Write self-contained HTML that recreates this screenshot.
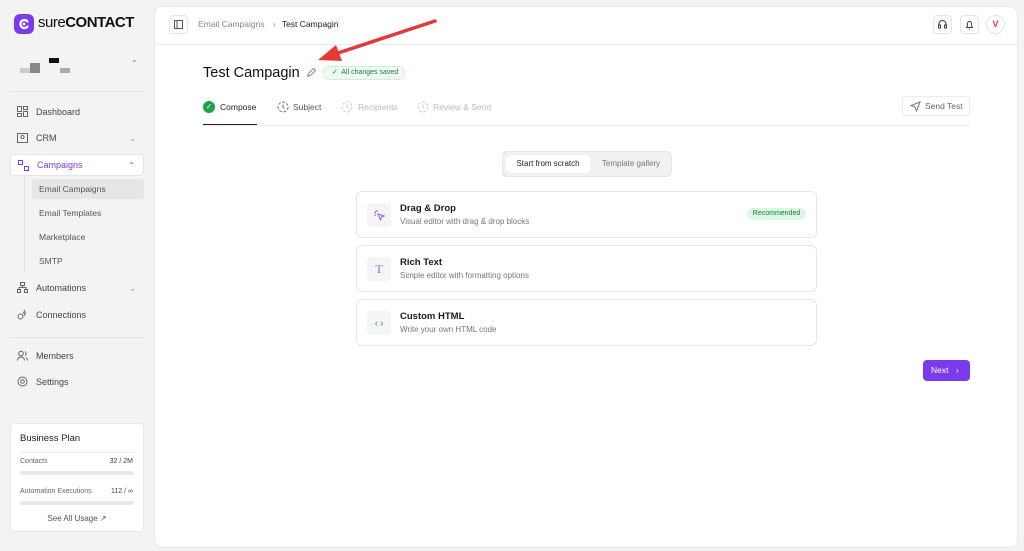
<!DOCTYPE html>
<html><head><meta charset="utf-8"><style>
*{box-sizing:border-box;margin:0;padding:0}
body{width:1024px;height:551px;background:#f3f3f4;font-family:"Liberation Sans",sans-serif;position:relative;overflow:hidden;color:#111}
.abs{position:absolute}
.nav{position:absolute;left:10px;width:134px;height:22px;font-size:9px;color:#444;display:flex;align-items:center;padding-left:26px}
.nav svg{position:absolute;left:7px;top:5px}
.sub{position:absolute;left:32px;width:112px;height:20px;font-size:8.5px;color:#555;display:flex;align-items:center;padding-left:7px}
.main{position:absolute;left:154px;top:6px;width:864px;height:542px;background:#fff;border-radius:8px;border:1px solid #e8e8ea}
.card{position:absolute;left:356px;width:461px;height:47px;border:1px solid #e6e6e8;border-radius:6px;background:#fff}
.card .ic{position:absolute;left:10px;top:11px;width:24px;height:24px;border-radius:4px;background:#f4f5f5;display:flex;align-items:center;justify-content:center}
.card .t{position:absolute;left:43px;top:11px;font-size:9.5px;font-weight:bold;color:#1a1a1a}
.card .d{position:absolute;left:43px;top:25px;font-size:8px;color:#777}
.ibtn{position:absolute;width:19px;height:19px;border:1px solid #e4e4e6;border-radius:4px;background:#fff}
</style></head><body>
<div class="abs" style="left:14px;top:14px;width:20px;height:20px;border-radius:6px;background:#7c3aed"></div>
<svg class="abs" style="left:14px;top:14px" width="20" height="20"><path d="M13.5 7.5A4 4 0 1 0 13.5 12.5" stroke="#fff" stroke-width="2.2" fill="none" stroke-linecap="round"/><circle cx="10" cy="10" r="1.4" fill="#fff"/></svg>
<div class="abs" style="left:38px;top:14px;font-size:15px;color:#111;letter-spacing:-0.5px">sure<b style="font-weight:bold">CONTACT</b></div>
<div class="abs" style="left:20px;top:68px;width:10px;height:5px;background:#ccc"></div>
<div class="abs" style="left:30px;top:63px;width:10px;height:10px;background:#888"></div>
<div class="abs" style="left:49px;top:58px;width:10px;height:5px;background:#111"></div>
<div class="abs" style="left:60px;top:68px;width:10px;height:5px;background:#aaa"></div>
<div class="abs" style="left:131px;top:59px;font-size:8px;color:#888">⌃</div>
<div class="abs" style="left:10px;top:91px;width:134px;height:1px;background:#e2e2e4"></div>
<div class="nav" style="top:101px"><svg width="11" height="11" fill="none" stroke="#666"><rect x=".5" y=".5" width="4" height="5"/><rect x="6.5" y=".5" width="4" height="3"/><rect x=".5" y="7.5" width="4" height="3"/><rect x="6.5" y="5.5" width="4" height="5"/></svg>Dashboard</div>
<div class="nav" style="top:127px"><svg width="11" height="11" fill="none" stroke="#666"><rect x=".5" y="1.5" width="10" height="9"/><circle cx="5.5" cy="5" r="1.6"/></svg>CRM<span style="position:absolute;right:8px;color:#999;font-size:8px">⌄</span></div>
<div class="nav" style="top:154px;background:#fff;border:1px solid #e6e6e8;border-radius:4px;color:#7c3aed"><svg width="11" height="11" fill="none" stroke="#7c3aed"><rect x=".5" y=".5" width="4" height="4"/><rect x="6.5" y="6.5" width="4" height="4"/></svg>Campaigns<span style="position:absolute;right:8px;font-size:8px">⌃</span></div>
<div class="abs" style="left:24px;top:177px;width:1px;height:96px;background:#e0e0e2"></div>
<div class="sub" style="top:179px;background:#e6e6e7;border-radius:3px">Email Campaigns</div>
<div class="sub" style="top:203px">Email Templates</div>
<div class="sub" style="top:227px">Marketplace</div>
<div class="sub" style="top:251px">SMTP</div>
<div class="nav" style="top:277px"><svg width="11" height="11" fill="none" stroke="#666"><rect x="3.5" y=".5" width="4" height="3"/><rect x=".5" y="7.5" width="3" height="3"/><rect x="7.5" y="7.5" width="3" height="3"/><path d="M5.5 3.5v2M2 7.5V5.5h7v2"/></svg>Automations<span style="position:absolute;right:8px;color:#999;font-size:8px">⌄</span></div>
<div class="nav" style="top:304px"><svg width="11" height="11" fill="none" stroke="#666"><circle cx="3.5" cy="7.5" r="2.5"/><path d="M8 1l-1.5 3h2L7 7"/></svg>Connections</div>
<div class="abs" style="left:10px;top:337px;width:134px;height:1px;background:#e2e2e4"></div>
<div class="nav" style="top:345px"><svg width="11" height="11" fill="none" stroke="#666"><circle cx="4" cy="3.5" r="2.3"/><path d="M.5 10.5a3.5 3.5 0 0 1 7 0M8 1.5a2.3 2.3 0 0 1 0 4M9 7.5a3.5 3.5 0 0 1 1.5 3"/></svg>Members</div>
<div class="nav" style="top:371px"><svg width="11" height="11" fill="none" stroke="#666"><circle cx="5.5" cy="5.5" r="4.5"/><circle cx="5.5" cy="5.5" r="1.8"/></svg>Settings</div>
<div class="abs" style="left:10px;top:423px;width:134px;height:109px;background:#fff;border:1px solid #e8e8ea;border-radius:4px">
<div class="abs" style="left:9px;top:9px;font-size:9.5px;color:#222">Business Plan</div>
<div class="abs" style="left:9px;top:28px;width:114px;height:1px;background:#eee"></div>
<div class="abs" style="left:9px;top:34px;font-size:7px;color:#666">Contacts</div>
<div class="abs" style="right:10px;top:34px;font-size:7px;color:#444">32 / 2M</div>
<div class="abs" style="left:9px;top:47px;width:114px;height:4px;background:#e8e8e9;border-radius:2px"></div>
<div class="abs" style="left:9px;top:64px;font-size:7px;color:#666">Automation Executions</div>
<div class="abs" style="right:10px;top:64px;font-size:7px;color:#444">112 / ∞</div>
<div class="abs" style="left:9px;top:77px;width:114px;height:4px;background:#e8e8e9;border-radius:2px"></div>
<div class="abs" style="left:0;width:132px;text-align:center;top:90px;font-size:8px;color:#555">See All Usage ↗</div>
</div>
<div class="main">
<div class="abs" style="left:0;top:37px;width:862px;height:1px;background:#ececee"></div>
<div class="ibtn" style="left:14px;top:8px"><svg width="17" height="17"><rect x="4.5" y="4.5" width="8" height="8" fill="none" stroke="#555"/><path d="M7 4.5v8" stroke="#555"/></svg></div>
<div class="abs" style="left:43px;top:12px;font-size:8.5px;color:#888">Email Campaigns <span style="margin:0 6px">›</span><span style="color:#222">Test Campagin</span></div>
<div class="ibtn" style="left:778px;top:8px"><svg width="17" height="17" fill="none" stroke="#444"><path d="M5 10V8a3.5 3.5 0 0 1 7 0v2"/><rect x="4.5" y="9" width="2" height="3"/><rect x="10.5" y="9" width="2" height="3"/></svg></div>
<div class="ibtn" style="left:805px;top:8px"><svg width="17" height="17" fill="none" stroke="#444"><path d="M5.5 11.5h6l-1-1.5V7.5a2 2 0 0 0-4 0V10zM8 13h1"/></svg></div>
<div class="abs" style="left:831px;top:8px;width:19px;height:19px;border:1px solid #e4e4e6;border-radius:50%;color:#e53935;font-size:9px;font-weight:bold;text-align:center;line-height:17px">V</div>
<div class="abs" style="left:48px;top:58px;font-size:14.5px;color:#111">Test Campagin</div>
<svg class="abs" style="left:151px;top:61px" width="10" height="10" fill="none" stroke="#888"><path d="M1.5 8.5l1-3 5-5 2 2-5 5z"/></svg>
<div class="abs" style="left:168px;top:59px;width:82px;height:14px;border:1px solid #cdeed8;background:#f0faf3;border-radius:7px;font-size:7px;color:#15803d;line-height:12px;padding-left:8px">✓&nbsp; All changes saved</div>
<div class="abs" style="left:48px;top:94px;width:12px;height:12px;border-radius:50%;background:#16a34a;color:#fff;font-size:8px;text-align:center;line-height:12px">✓</div>
<div class="abs" style="left:65px;top:95px;font-size:8.5px;color:#222">Compose</div>
<div class="abs" style="left:48px;top:117px;width:54px;height:1.5px;background:#222"></div>
<svg class="abs" style="left:122px;top:94px" width="12" height="12" fill="none" stroke="#777"><circle cx="6" cy="6" r="5" stroke-dasharray="3 1.5"/><path d="M6 3.5V6l1.5 1.5"/></svg>
<div class="abs" style="left:138px;top:95px;font-size:8.5px;color:#555">Subject</div>
<svg class="abs" style="left:186px;top:94px" width="12" height="12" fill="none" stroke="#ccc"><circle cx="6" cy="6" r="5" stroke-dasharray="3 1.5"/><path d="M6 3.5V6l1.5 1.5"/></svg>
<div class="abs" style="left:203px;top:95px;font-size:8.5px;color:#bbb">Recipients</div>
<svg class="abs" style="left:262px;top:94px" width="12" height="12" fill="none" stroke="#ccc"><circle cx="6" cy="6" r="5" stroke-dasharray="3 1.5"/><path d="M6 3.5V6l1.5 1.5"/></svg>
<div class="abs" style="left:278px;top:95px;font-size:8.5px;color:#bbb">Review &amp; Send</div>
<div class="abs" style="left:747px;top:89px;width:68px;height:20px;border:1px solid #ececee;border-radius:4px;font-size:8.5px;color:#666;line-height:18px;padding-left:22px">Send Test<svg class="abs" style="left:7px;top:4px" width="11" height="11" fill="none" stroke="#777"><path d="M10 1L1 4.5l4 1.5 1.5 4z"/></svg></div>
<div class="abs" style="left:48px;top:118px;width:767px;height:1px;background:#ececee"></div>
<div class="abs" style="left:347px;top:144px;width:170px;height:26px;background:#f1f1f2;border:1px solid #e6e6e8;border-radius:5px">
<div class="abs" style="left:3px;top:3px;width:84px;height:18px;background:#fff;border-radius:4px;font-size:8px;color:#222;text-align:center;line-height:18px">Start from scratch</div>
<div class="abs" style="left:90px;top:3px;width:76px;height:18px;font-size:8px;color:#777;text-align:center;line-height:18px">Template gallery</div>
</div>
</div>
<div class="card" style="top:191px"><div class="ic"><svg width="12" height="12" fill="none" stroke="#9b5de5"><path d="M5 5l6 2-2.5 1L7.5 11z"/><path d="M1 4h2M4 1v2M2 2l1 1M1.5 7l1.5-1"/></svg></div><div class="t">Drag &amp; Drop</div><div class="d">Visual editor with drag &amp; drop blocks</div>
<div class="abs" style="right:10px;top:16px;width:59px;height:12px;background:#dcf7e5;border-radius:6px;font-size:7px;color:#15803d;text-align:center;line-height:12px">Recommended</div></div>
<div class="card" style="top:245px"><div class="ic"><span style="color:#9b5de5;font-size:12px;font-family:'Liberation Serif',serif">T</span></div><div class="t">Rich Text</div><div class="d">Simple editor with formatting options</div></div>
<div class="card" style="top:299px"><div class="ic"><span style="color:#16a34a;font-size:9px">‹ ›</span></div><div class="t">Custom HTML</div><div class="d">Write your own HTML code</div></div>
<div class="abs" style="left:923px;top:360px;width:47px;height:21px;background:#7c3aed;border-radius:4px;color:#fff;font-size:8.5px;line-height:21px;padding-left:8px">Next <span style="margin-left:5px">›</span></div>
<svg class="abs" style="left:300px;top:15px" width="140" height="50"><path d="M135 6L32 40" stroke="#e53935" stroke-width="3.5" stroke-linecap="round"/><path d="M18 45L36 30 42 46z" fill="#e53935"/></svg>
</body></html>
